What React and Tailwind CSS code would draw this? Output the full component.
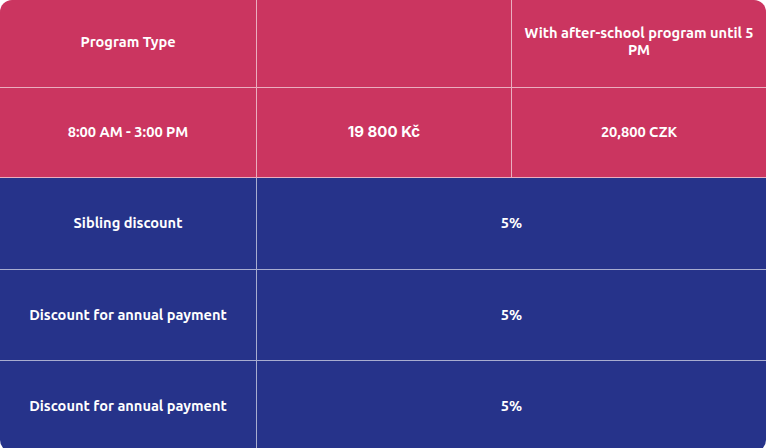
export default function App() {
  const font = { fontFamily: '"Ubuntu", "Noto Sans", "Open Sans", sans-serif' };
  const cell = "flex items-center justify-center text-center text-white font-bold text-[14.6px] leading-[17px] px-3 pb-[2px]";
  return (
    <div className="w-[768px] h-[448px] bg-white overflow-hidden" style={font}>
      <div className="w-[766px] rounded-[12px] overflow-hidden">
        <div className="grid grid-cols-[257px_255px_254px] bg-[#cb3560]">
          <div className={`${cell} h-[88px] border-r border-b border-white/60 pb-[4px]`}>Program Type</div>
          <div className={`${cell} h-[88px] border-r border-b border-white/60`}></div>
          <div className={`${cell} h-[88px] border-b border-white/60 pb-[6px] px-2`}>
            <span>With after-school program until 5<br />PM</span>
          </div>
          <div className={`${cell} h-[90px] border-r border-b border-white/60`}>8:00 AM - 3:00 PM</div>
          <div className={`${cell} h-[90px] border-r border-b border-white/60 text-[15px]`} style={{ fontFamily: 'Inter, "Liberation Sans", sans-serif' }}>19 800 Kč</div>
          <div className={`${cell} h-[90px] border-b border-white/60`}>20,800 CZK</div>
        </div>
        <div className="grid grid-cols-[257px_509px] bg-[#26338a]">
          <div className={`${cell} h-[92px] border-r border-b border-white/60`}>Sibling discount</div>
          <div className={`${cell} h-[92px] border-b border-white/60`}>5%</div>
          <div className={`${cell} h-[91px] border-r border-b border-white/60`}>Discount for annual payment</div>
          <div className={`${cell} h-[91px] border-b border-white/60`}>5%</div>
          <div className={`${cell} h-[91px] border-r border-white/60`}>Discount for annual payment</div>
          <div className={`${cell} h-[91px]`}>5%</div>
        </div>
      </div>
    </div>
  );
}
